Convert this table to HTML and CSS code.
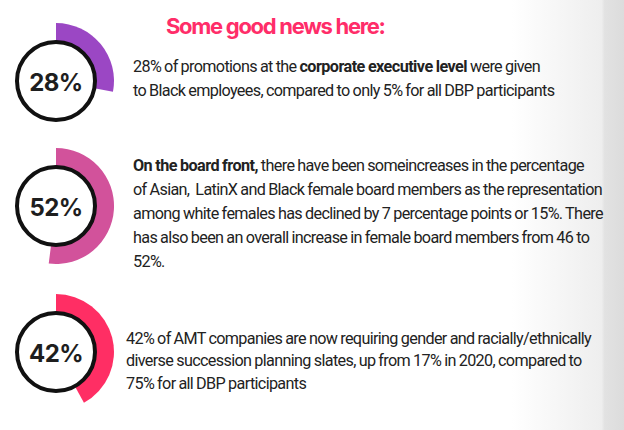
FILE: index.html
```
<!DOCTYPE html>
<html lang="en">
<head>
<meta charset="utf-8">
<title>Some good news here</title>
<link rel="stylesheet" href="styles.css">
</head>
<body>
<main class="page">
  <section class="row row-first">
    <svg class="chart" width="116" height="120" viewBox="0 0 116 120">
      <path class="wedge wedge-purple" d="M56 60 L56 2 A58 58 0 0 1 112.97 70.87 Z"/>
      <circle class="ring" cx="56" cy="60" r="39"/>
      <text class="chart-num" x="56" y="70">28%</text>
    </svg>
    <div class="copy copy-first">
      <h1 class="title">Some good news here:</h1>
      <p class="para p1"><span class="line">28% of promotions at the <b>corporate executive level</b> were given</span><span class="line">to Black employees, compared to only 5% for all DBP participants</span></p>
    </div>
  </section>

  <section class="row row-second">
    <svg class="chart" width="116" height="120" viewBox="0 0 116 120">
      <path class="wedge wedge-magenta" d="M56 60 L56 2 A58 58 0 1 1 48.73 117.54 Z"/>
      <circle class="ring" cx="56" cy="60" r="39"/>
      <text class="chart-num" x="56" y="70">52%</text>
    </svg>
    <div class="copy copy-second">
      <p class="para p2"><span class="line"><b>On the board front,</b> there have been someincreases in the percentage</span><span class="line">of Asian,&nbsp; LatinX and Black female board members as the representation</span><span class="line">among white females has declined by 7 percentage points or 15%. There</span><span class="line">has also been an overall increase in female board members from 46 to</span><span class="line">52%.</span></p>
    </div>
  </section>

  <section class="row row-third">
    <svg class="chart" width="116" height="120" viewBox="0 0 116 120">
      <path class="wedge wedge-red" d="M56 60 L56 2 A58 58 0 0 1 83.94 110.82 Z"/>
      <circle class="ring" cx="56" cy="60" r="39"/>
      <text class="chart-num" x="56" y="70">42%</text>
    </svg>
    <div class="copy copy-third">
      <p class="para p3"><span class="line">42% of AMT companies are now requiring gender and racially/ethnically</span><span class="line">diverse succession planning slates, up from 17% in 2020, compared to</span><span class="line">75% for all DBP participants</span></p>
    </div>
  </section>
</main>
</body>
</html>
```
FILE: styles.css
```
html {
  background: linear-gradient(to right, #ffffff 0%, #ffffff 82%, #eeeeee 96.4%, #e2e2e2 96.9%, #dcdcdc 100%);
  min-height: 100%;
}

body {
  margin: 0;
  font-family: Roboto, "Noto Sans", sans-serif;
  color: #222222;
}

.page {
  display: flex;
  flex-direction: column;
  padding-top: 13px;
  width: 624px;
  height: 417px;
  overflow: hidden;
}

.row {
  display: flex;
  align-items: flex-start;
}

.row-second {
  margin-top: 5px;
}

.row-third {
  margin-top: 18px;
}

.chart {
  flex: 0 0 116px;
  display: block;
}

.row-first .chart {
  margin-top: 8px;
}

.wedge-purple { fill: #9b47c4; }
.wedge-magenta { fill: #d2529b; }
.wedge-red { fill: #ff2e64; }

.ring {
  fill: #ffffff;
  stroke: #111111;
  stroke-width: 4;
}

.chart-num {
  font-family: Inter, "Noto Sans", sans-serif;
  font-weight: 700;
  font-size: 24px;
  letter-spacing: -0.6px;
  text-anchor: middle;
  fill: #1e1e1e;
}

.copy {
  display: flex;
  flex-direction: column;
}

.copy-first,
.copy-second {
  padding-left: 17px;
}

.copy-third {
  padding-left: 10px;
}

.title {
  margin: 0 0 0 33px;
  font-family: Inter, "Noto Sans", sans-serif;
  font-size: 22px;
  line-height: 26px;
  font-weight: 700;
  letter-spacing: -1.3px;
  color: #ff2d69;
  white-space: nowrap;
}

.para {
  margin: 0;
  font-size: 16.2px;
  letter-spacing: -0.65px;
  word-spacing: -0.4px;
  white-space: nowrap;
}

.para b {
  font-weight: 700;
  letter-spacing: -0.55px;
}

.line {
  display: block;
}

.p1 {
  margin-top: 16px;
  line-height: 23.5px;
}

.p2 {
  margin-top: 7.5px;
  line-height: 24px;
}

.p3 {
  margin-top: 36px;
  line-height: 22.7px;
}
```
